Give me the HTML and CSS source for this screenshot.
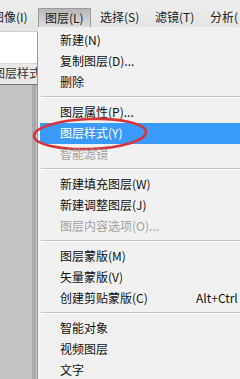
FILE: index.html
```html
<!DOCTYPE html>
<html lang="zh-CN">
<head>
  <meta charset="UTF-8">
  <meta name="viewport" content="width=device-width, initial-scale=1.0">
  <title>图层菜单</title>
  <link rel="stylesheet" href="styles.css">
</head>
<body>
<div class="menubar">
  <span class="menubar-item first">图像(I)</span>
  <span class="menubar-item active">图层(L)</span>
  <span class="menubar-item">选择(S)</span>
  <span class="menubar-item">滤镜(T)</span>
  <span class="menubar-item">分析(</span>
</div>

<div class="side-panel">
  <div class="side-input"></div>
  <div class="side-tab">图层样式</div>
  <div class="side-body"></div>
</div>

<!-- dropdown of the active 图层 menu, drawn over the panel -->
<ul class="dropdown">
  <li class="item">新建(N)</li>
  <li class="item">复制图层(D)...</li>
  <li class="item">删除</li>
  <li class="separator"></li>
  <li class="item">图层属性(P)...</li>
  <li class="item selected">
    图层样式(Y)
    <svg class="mark" width="124" height="38" viewBox="0 0 124 38">
      <ellipse cx="59" cy="19" rx="56" ry="15" transform="rotate(-2 59 19)"
               fill="none" stroke="#d8343c" stroke-width="2.6"/>
    </svg>
  </li>
  <li class="item disabled">智能滤镜</li>
  <li class="separator"></li>
  <li class="item">新建填充图层(W)</li>
  <li class="item">新建调整图层(J)</li>
  <li class="item disabled">图层内容选项(O)...</li>
  <li class="separator"></li>
  <li class="item">图层蒙版(M)</li>
  <li class="item">矢量蒙版(V)</li>
  <li class="item">创建剪贴蒙版(C)<span class="shortcut">Alt+Ctrl</span></li>
  <li class="separator"></li>
  <li class="item">智能对象</li>
  <li class="item">视频图层</li>
  <li class="item">文字</li>
</ul>
</body>
</html>
```

FILE: styles.css
```css
body {
  margin: 0;
  padding: 0;
  width: 240px;
  height: 379px;
  overflow: hidden;
  position: relative;
  font-family: "Noto Sans CJK SC", "Microsoft YaHei", sans-serif;
  font-size: 12px;
  color: #111;
  background: #c2c2c2;
}

/* top menu bar */
.menubar {
  height: 32px;
  display: flex;
  align-items: flex-start;
  white-space: nowrap;
  overflow: hidden;
  background: linear-gradient(to bottom, #eeeeee, #e3e3e3);
  border-bottom: 1px solid #cfcfcf;
  box-sizing: border-box;
}

.menubar-item {
  flex-shrink: 0;
  width: 55px;
  height: 20px;
  margin-top: 8px;
  line-height: 18px;
  padding-left: 7px;
  box-sizing: border-box;
  color: #222;
}

.menubar-item.first {
  margin-left: -17px;
  padding-left: 9px;
}

.menubar-item.active {
  width: 53px;
  margin-right: 2px;
  height: 24px;
  background: linear-gradient(to bottom, #b6b6b6, #d4d4d4 60%, #e6e6e6);
  border: 1px solid #9c9c9c;
  border-bottom: none;
  padding-left: 6px;
  line-height: 17px;
}

/* left panel behind the dropdown */
.side-panel {
  width: 38px;
  height: 347px;
  display: flex;
  flex-direction: column;
  box-sizing: border-box;
  border-right: 1px solid #9a9a9a;
}

.side-input {
  height: 31px;
  background: #ffffff;
}

.side-tab {
  height: 20px;
  line-height: 18px;
  margin-left: -7px;
  white-space: nowrap;
  overflow: hidden;
  background: #e9e9e9;
  border-top: 1px solid #d6d6d6;
  border-bottom: 1px solid #7c7c7c;
  color: #333;
}

.side-body {
  flex-grow: 1;
  background: linear-gradient(to right, #c3c3c3 86%, #aaaaaa 88%, #aaaaaa 97%, #d8d8d8);
}

/* dropdown */
.dropdown {
  position: absolute;
  top: 27px;
  left: 38px;
  right: 0;
  bottom: 0;
  list-style: none;
  margin: 0;
  padding: 2.5px 0 0 0;
  background: #f1f1f1;
  white-space: nowrap;
}

.item {
  position: relative;
  height: 21px;
  line-height: 19px;
  padding-left: 22px;
}

.item.selected {
  background: #3a9af9;
  color: #ffffff;
  margin-left: 2px;
  padding-left: 20px;
}

.item.disabled {
  color: #a2a2a2;
}

.shortcut {
  position: absolute;
  left: 158px;
}

.separator {
  height: 9px;
  box-sizing: border-box;
  margin-left: 3px;
  border-top: 3px solid #f1f1f1;
  border-bottom: 4px solid #f1f1f1;
  background: linear-gradient(to bottom, #c6c6c6 50%, #ffffff 50%);
}

.mark {
  position: absolute;
  left: -9px;
  top: -8px;
}
```
